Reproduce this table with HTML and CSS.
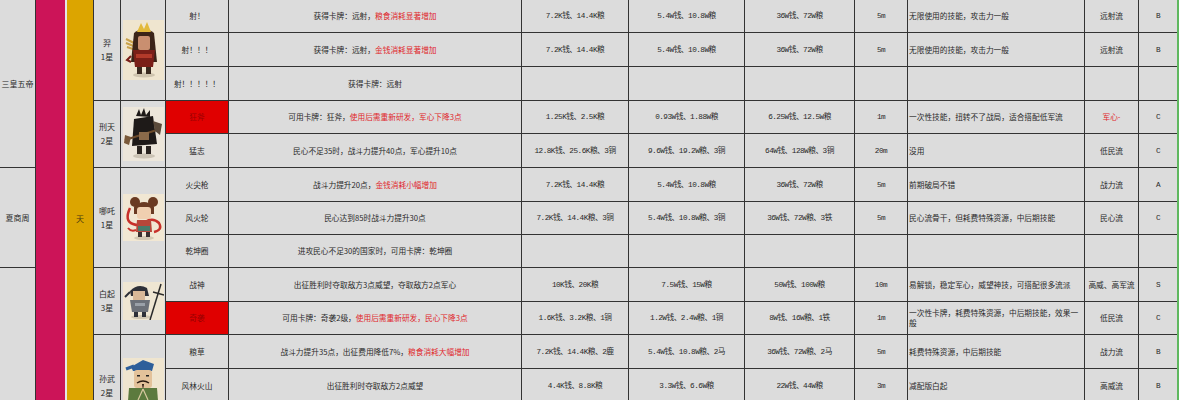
FILE: index.html
```html
<!DOCTYPE html>
<html lang="zh-CN">
<head>
<meta charset="utf-8">
<title>科技卡牌表</title>
<link rel="stylesheet" href="styles.css">
</head>
<body>
<div class="sheet">
  <!-- row 1 -->
  <div class="cell era span5">三皇五帝</div>
  <div class="band span13"><div class="stripe magenta"></div><div class="stripe gold">天</div></div>
  <div class="cell name span3">羿<br>1星</div>
  <div class="cell pic span3">
    <svg width="41" height="60" viewBox="0 0 41 60">
      <rect width="41" height="60" fill="#efe5cf"/>
      <ellipse cx="21" cy="55" rx="11" ry="2.5" fill="#cfc4ae"/>
      <path d="M3 19 L13 24 M3 23 L13 27 M4 27 L13 30" stroke="#c9a24a" stroke-width="2"/>
      <path d="M11 13 Q21 5 31 13 L34 42 L8 42 Z" fill="#3b2418"/>
      <path d="M14 12 L18 3 L21 9 L24 2 L28 12 Z" fill="#e2b93b"/>
      <rect x="15" y="16" width="12" height="14" rx="2" fill="#c98f70"/>
      <path d="M10 30 H32 L30 47 H12 Z" fill="#7a1f18"/>
      <rect x="13" y="34" width="16" height="4" fill="#b23a2a"/>
      <path d="M8 36 L4 40 L8 42" stroke="#7a1f18" stroke-width="2" fill="none"/>
      <rect x="14" y="47" width="5" height="7" fill="#3a2a20"/>
      <rect x="23" y="47" width="5" height="7" fill="#3a2a20"/>
    </svg>
  </div>
  <div class="cell skill">射！</div>
  <div class="cell effect">获得卡牌：远射，<span class="red">粮食消耗显著增加</span></div>
  <div class="cell cost">7.2K钱、14.4K粮</div>
  <div class="cell cost">5.4W钱、10.8W粮</div>
  <div class="cell cost">36W钱、72W粮</div>
  <div class="cell cost">5m</div>
  <div class="cell note">无限使用的技能，攻击力一般</div>
  <div class="cell">远射流</div>
  <div class="cell cost">B</div>

  <!-- row 2 -->
  <div class="cell skill">射！！！</div>
  <div class="cell effect">获得卡牌：远射，<span class="red">金钱消耗显著增加</span></div>
  <div class="cell cost">7.2K钱、14.4K粮</div>
  <div class="cell cost">5.4W钱、10.8W粮</div>
  <div class="cell cost">36W钱、72W粮</div>
  <div class="cell cost">5m</div>
  <div class="cell note">无限使用的技能，攻击力一般</div>
  <div class="cell">远射流</div>
  <div class="cell cost">B</div>

  <!-- row 3 -->
  <div class="cell skill">射！！！！！</div>
  <div class="cell effect">获得卡牌：远射</div>
  <div class="cell cost"></div>
  <div class="cell cost"></div>
  <div class="cell cost"></div>
  <div class="cell cost"></div>
  <div class="cell note"></div>
  <div class="cell"></div>
  <div class="cell cost"></div>

  <!-- row 4 -->
  <div class="cell name span2">刑天<br>2星</div>
  <div class="cell pic span2">
    <svg width="41" height="54" viewBox="0 0 41 54">
      <rect width="41" height="54" fill="#ece6da"/>
      <ellipse cx="21" cy="49" rx="11" ry="2.5" fill="#cbc3b4"/>
      <path d="M13 9 L16 2 L18 8 L21 1 L23 8 L27 3 L27 10" fill="#1e1a18"/>
      <path d="M11 12 L30 9 L34 37 L9 39 Z" fill="#1e1a18"/>
      <path d="M2 33 L37 22" stroke="#6b4a2a" stroke-width="2.2"/>
      <path d="M30 14 L39 17 L37 28 L32 24 Z" fill="#5a4a3a"/>
      <path d="M2 28 L8 30 L6 38 L1 36 Z" fill="#7a5a3a"/>
      <rect x="16" y="25" width="10" height="8" fill="#8a6a4a"/>
      <rect x="14" y="39" width="5" height="8" fill="#2a2420"/>
      <rect x="23" y="39" width="5" height="8" fill="#2a2420"/>
    </svg>
  </div>
  <div class="cell skill hot">狂斧</div>
  <div class="cell effect">可用卡牌：狂斧，<span class="red">使用后需重新研发，军心下降3点</span></div>
  <div class="cell cost">1.25K钱、2.5K粮</div>
  <div class="cell cost">0.93W钱、1.88W粮</div>
  <div class="cell cost">6.25W钱、12.5W粮</div>
  <div class="cell cost">1m</div>
  <div class="cell note">一次性技能，扭转不了战局，适合搭配低军流</div>
  <div class="cell red">军心-</div>
  <div class="cell cost">C</div>

  <!-- row 5 -->
  <div class="cell skill">猛志</div>
  <div class="cell effect">民心不足35时，战斗力提升40点，军心提升10点</div>
  <div class="cell cost">12.8K钱、25.6K粮、3铜</div>
  <div class="cell cost">9.6W钱、19.2W粮、3铜</div>
  <div class="cell cost">64W钱、128W粮、3铜</div>
  <div class="cell cost">20m</div>
  <div class="cell note">没用</div>
  <div class="cell">低民流</div>
  <div class="cell cost">C</div>

  <!-- row 6 -->
  <div class="cell era span3">夏商周</div>
  <div class="cell name span3">哪吒<br>1星</div>
  <div class="cell pic span3">
    <svg width="41" height="47" viewBox="0 0 41 47">
      <rect width="41" height="47" fill="#f1e7d3"/>
      <ellipse cx="21" cy="44" rx="10" ry="2" fill="#d2c7b2"/>
      <circle cx="12" cy="8" r="5" fill="#6a3a22"/>
      <circle cx="30" cy="8" r="5" fill="#6a3a22"/>
      <path d="M11 13 Q21 3 31 13 L31 20 L11 20 Z" fill="#6a3a22"/>
      <rect x="14" y="13" width="14" height="12" rx="3" fill="#f0cfb0"/>
      <path d="M7 14 Q1 27 10 30 Q18 33 22 28 Q30 23 36 29 Q40 36 31 38" stroke="#c8302a" stroke-width="2.5" fill="none"/>
      <path d="M5 34 Q8 38 13 36" stroke="#c8302a" stroke-width="2" fill="none"/>
      <path d="M14 26 H28 L29 38 H13 Z" fill="#b8463a"/>
      <rect x="15" y="32" width="12" height="5" fill="#4a7a6a"/>
      <rect x="15" y="38" width="4" height="5" fill="#3a3030"/>
      <rect x="23" y="38" width="4" height="5" fill="#3a3030"/>
    </svg>
  </div>
  <div class="cell skill">火尖枪</div>
  <div class="cell effect">战斗力提升20点，<span class="red">金钱消耗小幅增加</span></div>
  <div class="cell cost">7.2K钱、14.4K粮</div>
  <div class="cell cost">5.4W钱、10.8W粮</div>
  <div class="cell cost">36W钱、72W粮</div>
  <div class="cell cost">5m</div>
  <div class="cell note">前期破局不错</div>
  <div class="cell">战力流</div>
  <div class="cell cost">A</div>

  <!-- row 7 -->
  <div class="cell skill">风火轮</div>
  <div class="cell effect">民心达到85时战斗力提升30点</div>
  <div class="cell cost">7.2K钱、14.4K粮、3铜</div>
  <div class="cell cost">5.4W钱、10.8W粮、3铜</div>
  <div class="cell cost">36W钱、72W粮、3铁</div>
  <div class="cell cost">5m</div>
  <div class="cell note">民心流骨干，但耗费特殊资源，中后期技能</div>
  <div class="cell">民心流</div>
  <div class="cell cost">C</div>

  <!-- row 8 -->
  <div class="cell skill">乾坤圈</div>
  <div class="cell effect">进攻民心不足30的国家时，可用卡牌：乾坤圈</div>
  <div class="cell cost"></div>
  <div class="cell cost"></div>
  <div class="cell cost"></div>
  <div class="cell cost"></div>
  <div class="cell note"></div>
  <div class="cell"></div>
  <div class="cell cost"></div>

  <!-- row 9 -->
  <div class="cell era span5"></div>
  <div class="cell name span2">白起<br>3星</div>
  <div class="cell pic span2">
    <svg width="41" height="38" viewBox="0 0 41 38">
      <rect width="41" height="38" fill="#efe6d2"/>
      <ellipse cx="18" cy="35" rx="10" ry="2" fill="#d0c6b2"/>
      <path d="M27 38 L38 2" stroke="#2a2a2a" stroke-width="1.5"/>
      <path d="M30 10 L41 13" stroke="#2a2a2a" stroke-width="1.5"/>
      <path d="M7 9 Q15 1 24 6 L26 14 L8 14 Z" fill="#2e3038"/>
      <path d="M7 10 L2 15" stroke="#2e3038" stroke-width="2"/>
      <rect x="10" y="9" width="12" height="9" fill="#d8b898"/>
      <path d="M7 18 H27 L25 30 H9 Z" fill="#6c7078"/>
      <rect x="12" y="21" width="10" height="3" fill="#9aa0a8"/>
      <rect x="11" y="30" width="4" height="5" fill="#2e3038"/>
      <rect x="19" y="30" width="4" height="5" fill="#2e3038"/>
    </svg>
  </div>
  <div class="cell skill">战神</div>
  <div class="cell effect">出征胜利时夺取敌方3点威望，夺取敌方2点军心</div>
  <div class="cell cost">10K钱、20K粮</div>
  <div class="cell cost">7.5W钱、15W粮</div>
  <div class="cell cost">50W钱、100W粮</div>
  <div class="cell cost">10m</div>
  <div class="cell note">易解锁，稳定军心，威望神技，可搭配很多流派</div>
  <div class="cell">高威、高军流</div>
  <div class="cell cost">S</div>

  <!-- row 10 -->
  <div class="cell skill hot">奇袭</div>
  <div class="cell effect">可用卡牌：奇袭2级，<span class="red">使用后需重新研发，民心下降3点</span></div>
  <div class="cell cost">1.6K钱、3.2K粮、1铜</div>
  <div class="cell cost">1.2W钱、2.4W粮、1铜</div>
  <div class="cell cost">8W钱、16W粮、1铁</div>
  <div class="cell cost">1m</div>
  <div class="cell note">一次性卡牌，耗费特殊资源，中后期技能，效果一般</div>
  <div class="cell">低民流</div>
  <div class="cell cost">C</div>

  <!-- row 11 -->
  <div class="cell name span3">孙武<br>2星</div>
  <div class="cell pic span3">
    <svg width="41" height="56" viewBox="0 0 41 56">
      <rect width="41" height="56" fill="#efe5cf"/>
      <path d="M8 9 L20 2 L31 6 L29 13 L10 13 Z" fill="#2e5f9a"/>
      <path d="M3 11 L11 8" stroke="#2e5f9a" stroke-width="3"/>
      <rect x="11" y="12" width="18" height="18" rx="3" fill="#e3c29a"/>
      <rect x="14" y="17" width="3" height="1.5" fill="#222"/>
      <rect x="23" y="17" width="3" height="1.5" fill="#222"/>
      <path d="M14 25 Q20 21 26 25" stroke="#2a1a10" stroke-width="1.5" fill="none"/>
      <path d="M19 26 L20 32 L21 26" fill="#2a1a10"/>
      <path d="M6 30 H34 L36 56 H4 Z" fill="#5c7a3e"/>
      <path d="M20 31 L15 42 M20 31 L25 42" stroke="#d8c8a0" stroke-width="1.2"/>
    </svg>
  </div>
  <div class="cell skill">粮草</div>
  <div class="cell effect">战斗力提升35点，出征费用降低7%，<span class="red">粮食消耗大幅增加</span></div>
  <div class="cell cost">7.2K钱、14.4K粮、2鹿</div>
  <div class="cell cost">5.4W钱、10.8W粮、2马</div>
  <div class="cell cost">36W钱、72W粮、2马</div>
  <div class="cell cost">5m</div>
  <div class="cell note">耗费特殊资源，中后期技能</div>
  <div class="cell">战力流</div>
  <div class="cell cost">B</div>

  <!-- row 12 -->
  <div class="cell skill">风林火山</div>
  <div class="cell effect">出征胜利时夺取敌方2点威望</div>
  <div class="cell cost">4.4K钱、8.8K粮</div>
  <div class="cell cost">3.3W钱、6.6W粮</div>
  <div class="cell cost">22W钱、44W粮</div>
  <div class="cell cost">3m</div>
  <div class="cell note">减配版白起</div>
  <div class="cell">高威流</div>
  <div class="cell cost">B</div>

  <!-- row 13 (below the fold) -->
  <div class="cell skill"></div>
  <div class="cell effect"></div>
  <div class="cell cost"></div>
  <div class="cell cost"></div>
  <div class="cell cost"></div>
  <div class="cell cost"></div>
  <div class="cell note"></div>
  <div class="cell"></div>
  <div class="cell cost"></div>
</div>
</body>
</html>
```

FILE: styles.css
```css
html, body {
  margin: 0;
  padding: 0;
  overflow: hidden;
  background: #ffffff;
}

body {
  font-family: "Noto Sans CJK SC", "Noto Sans", sans-serif;
  font-size: 7.7px;
  color: #2a2a2a;
}

.sheet {
  display: grid;
  grid-template-columns: 35px 57px 26px 44px 62px 292px 106px 115px 109px 52px 176px 53px 38px;
  grid-template-rows: 32px 33px 33px 32px 33px 33px 32px 32px 33px 32px 33px 33px 33px;
  gap: 1px;
  width: 1177px;
  background: #333333;
  border-right: 2px solid #5fb85f;
}

.cell {
  background: #dcdcdc;
  display: flex;
  align-items: center;
  justify-content: center;
  text-align: center;
  line-height: 10px;
  overflow: hidden;
}

.span2 { grid-row: span 2; }
.span3 { grid-row: span 3; }
.span5 { grid-row: span 5; }
.span13 { grid-row: span 13; }

.era { font-size: 8px; }

.band {
  display: flex;
  background: #e6e6e6;
}

.stripe {
  display: flex;
  align-items: center;
  justify-content: center;
}

.magenta {
  width: 29px;
  margin-right: 2px;
  background: #cc1458;
}

.gold {
  flex: 1;
  background: #dca500;
  font-size: 8px;
  color: #4a3a10;
}

.name {
  line-height: 14px;
  font-size: 8px;
}

.pic svg {
  display: block;
}

.hot {
  background: #e00000;
  color: #9a0000;
}

.red {
  color: #e0262b;
}

.cost {
  font-family: "Liberation Mono", "Noto Sans CJK SC", monospace;
  letter-spacing: -0.5px;
}

.note {
  justify-content: flex-start;
  text-align: left;
  padding-left: 1px;
}
```
